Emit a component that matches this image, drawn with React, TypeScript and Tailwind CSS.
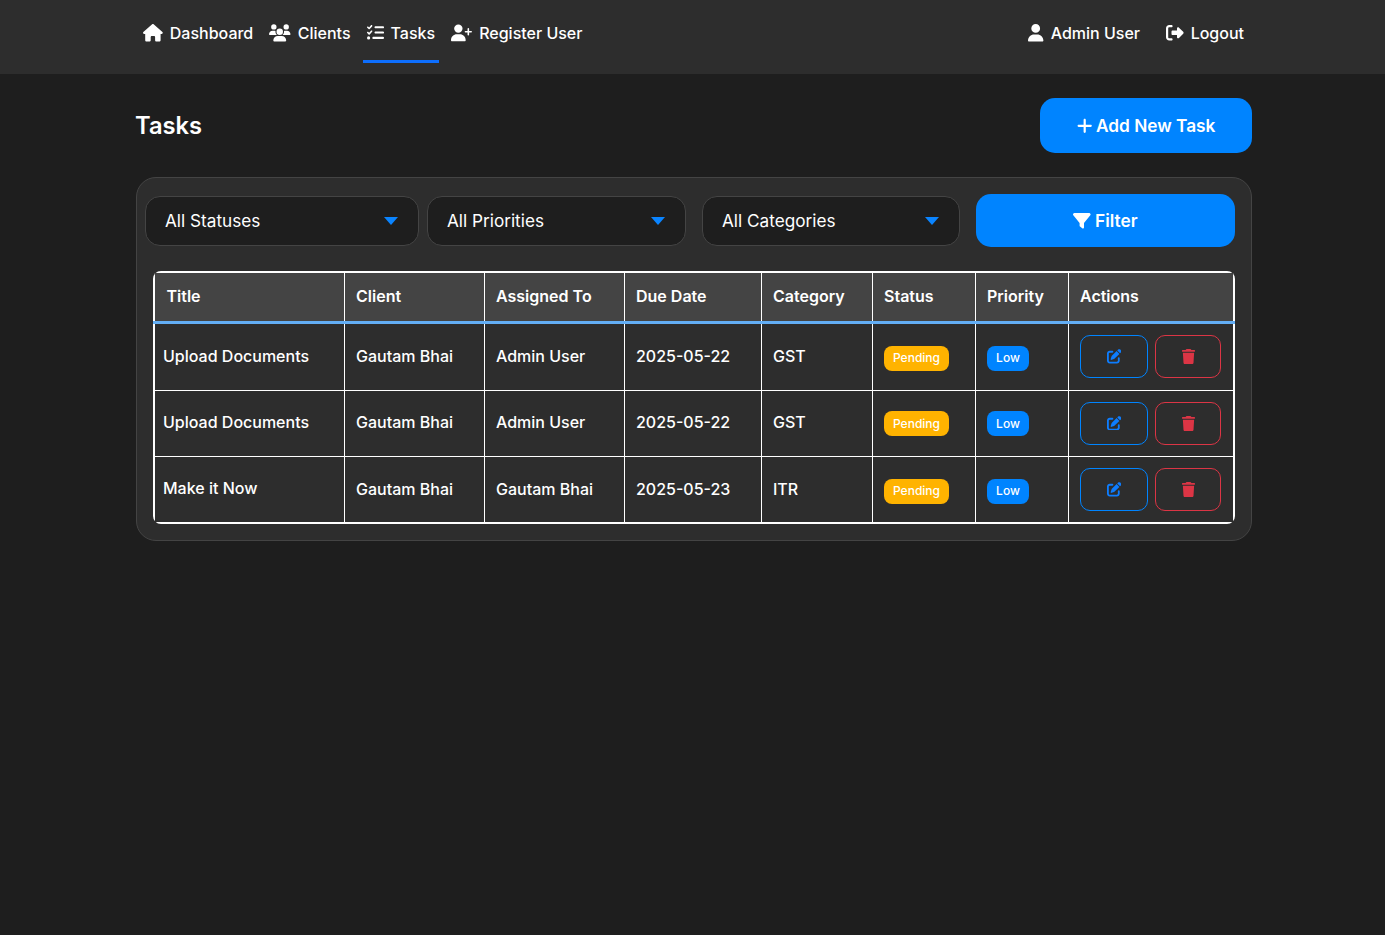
import React from "react";
import { FaHouse, FaUsers, FaListCheck, FaUserPlus, FaUser, FaRightFromBracket, FaPlus, FaFilter, FaPenToSquare, FaTrash } from "react-icons/fa6";

const font = { fontFamily: '"Inter", "Liberation Sans", sans-serif' };

function NavLink({ icon, label, active }: { icon: React.ReactNode; label: string; active?: boolean }) {
  return (
    <a className={`flex items-center h-[57px] px-1 mt-[6px] border-b-[3px] text-[16px] font-medium text-white ${active ? "border-[#0d6efd]" : "border-transparent"}`}>
      <span className="mr-[7px] flex items-center">{icon}</span>
      {label}
    </a>
  );
}

function Select({ label, w, ml }: { label: string; w: string; ml: string }) {
  return (
    <div className={`flex items-center justify-between h-[50px] rounded-[15px] bg-[#1e1e1e] border border-[#444444] pl-[19px] pr-[20px] text-[17.2px] text-white ${w} ${ml}`}>
      <span className="pt-[1px]">{label}</span>
      <svg width="14" height="8" viewBox="0 0 14 8"><path d="M0 0h14L7 8z" fill="#0a84ff" /></svg>
    </div>
  );
}

const rows = [
  { t: "Upload Documents", c: "Gautam Bhai", a: "Admin User", d: "2025-05-22", g: "GST", h: "h-[68px]", title: "pb-[2px]", text: "pb-[2px]", badge: "pt-[2px]" },
  { t: "Upload Documents", c: "Gautam Bhai", a: "Admin User", d: "2025-05-22", g: "GST", h: "h-[66px]", title: "pb-[2px]", text: "pb-[2px]", badge: "" },
  { t: "Make it Now", c: "Gautam Bhai", a: "Gautam Bhai", d: "2025-05-23", g: "ITR", h: "h-[67px]", title: "pb-[2px]", text: "", badge: "pt-[2px]" },
];

const th = "border border-white pl-[11.5px] pr-[10px] pb-[2px] text-left text-[16px] font-semibold text-white bg-[#444444] border-b-[3px] border-b-[#63aef5]";
const td = "border border-white pl-[11.5px] pr-[10px] text-[16px] font-medium text-white align-middle";

export default function App() {
  return (
    <div style={font} className="min-h-[935px] bg-[#1e1e1e] text-white">
      <nav className="h-[74px] bg-[#2d2d2d]">
        <div className="w-[1116px] ml-[136px] flex justify-between px-[3px] pr-[4px]">
          <div className="flex gap-2">
            <NavLink icon={<FaHouse className="w-[19.8px] h-[17.6px]" />} label="Dashboard" />
            <NavLink icon={<FaUsers className="w-[21.5px] h-[17.6px]" />} label="Clients" />
            <NavLink icon={<FaListCheck className="w-[17.1px] h-[17.1px]" />} label="Tasks" active />
            <NavLink icon={<FaUserPlus className="w-[21px] h-[17.6px]" />} label="Register User" />
          </div>
          <div className="flex gap-[18px]">
            <NavLink icon={<FaUser className="w-[15.4px] h-[17.6px]" />} label="Admin User" />
            <NavLink icon={<FaRightFromBracket className="w-[17.6px] h-[17.6px]" />} label="Logout" />
          </div>
        </div>
      </nav>
      <main className="w-[1116px] ml-[136px] pt-[24px]">
        <div className="flex items-center justify-between h-[55px]">
          <h1 className="-ml-[1px] text-[23.7px] font-semibold leading-none">Tasks</h1>
          <button className="flex items-center justify-center gap-[4px] w-[212px] h-[55px] rounded-[15px] bg-[#0084ff] text-[17.28px] font-semibold text-white">
            <FaPlus className="w-[15.4px] h-[17.6px]" />
            <span className="pt-[1px]">Add New Task</span>
          </button>
        </div>
        <section className="mt-[24px] h-[364px] rounded-[20px] bg-[#2d2d2d] border border-[#444444] pt-[16px] pl-[8px]">
          <div className="flex items-center h-[53px]">
            <Select label="All Statuses" w="w-[274px]" ml="" />
            <Select label="All Priorities" w="w-[259px]" ml="ml-[8px]" />
            <Select label="All Categories" w="w-[258px]" ml="ml-[16px]" />
            <button className="ml-[16px] flex items-center justify-center gap-[4px] w-[259px] h-[53px] rounded-[15px] bg-[#0084ff] text-[17.28px] font-semibold text-white">
              <FaFilter className="w-[17.6px] h-[17.6px]" />
              <span className="pt-[1px]">Filter</span>
            </button>
          </div>
          <div className="mt-[24px] ml-[8px] w-[1082px] rounded-[8px] overflow-hidden">
            <table className="w-[1082px] table-fixed border-collapse border-2 border-white">
              <colgroup>
                <col className="w-[190px]" />
                <col className="w-[140px]" />
                <col className="w-[140px]" />
                <col className="w-[137px]" />
                <col className="w-[111px]" />
                <col className="w-[103px]" />
                <col className="w-[93px]" />
                <col className="w-[166px]" />
              </colgroup>
              <thead>
                <tr className="h-[50px]">
                  {["Title", "Client", "Assigned To", "Due Date", "Category", "Status", "Priority", "Actions"].map((h) => (
                    <th key={h} className={th}>{h}</th>
                  ))}
                </tr>
              </thead>
              <tbody className="bg-[#2d2d2d]">
                {rows.map((r, i) => (
                  <tr key={i} className={r.h}>
                    <td className={`${td} !pl-[8px] ${r.title}`}>{r.t}</td>
                    <td className={`${td} ${r.text}`}>{r.c}</td>
                    <td className={`${td} ${r.text}`}>{r.a}</td>
                    <td className={`${td} ${r.text}`}>{r.d}</td>
                    <td className={`${td} ${r.text}`}>{r.g}</td>
                    <td className={`${td} ${r.badge}`}>
                      <span className="inline-flex items-center justify-center w-[65px] h-[25px] rounded-[8px] bg-[#ffb300] text-[12px] font-medium text-white">Pending</span>
                    </td>
                    <td className={`${td} ${r.badge}`}>
                      <span className="inline-flex items-center justify-center w-[42px] h-[25px] rounded-[8px] bg-[#0084ff] text-[12px] font-medium text-white">Low</span>
                    </td>
                    <td className={`${td} !pl-[11px]`}>
                      <div className="flex gap-[7px]">
                        <button className="flex items-center justify-center w-[68px] h-[43px] pl-[1px] rounded-[10px] border border-[#0084ff] text-[#0d7dff]">
                          <FaPenToSquare className="w-[14.5px] h-[14.5px]" />
                        </button>
                        <button className="flex items-center justify-center w-[66px] h-[43px] pl-[2px] rounded-[10px] border border-[#dc3545] text-[#dc3545]">
                          <FaTrash className="w-[15px] h-[15px]" />
                        </button>
                      </div>
                    </td>
                  </tr>
                ))}
              </tbody>
            </table>
          </div>
        </section>
      </main>
    </div>
  );
}
